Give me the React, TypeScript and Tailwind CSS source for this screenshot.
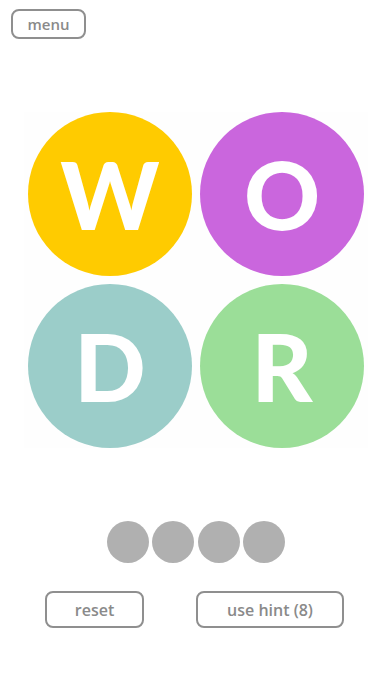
const tiles = [
  { letter: "W", color: "bg-[#ffcb00]" },
  { letter: "O", color: "bg-[#ca66dd]" },
  { letter: "D", color: "bg-[#9bcdc9]" },
  { letter: "R", color: "bg-[#9bde98]" },
];

export default function App() {
  return (
    <div
      className="w-[392px] h-[696px] bg-white flex flex-col"
      style={{ fontFamily: "'Open Sans', 'Noto Sans', sans-serif" }}
    >
      {/* top bar */}
      <div className="pt-[9px] pl-[11px]">
        <button className="w-[75px] h-[30px] rounded-[8px] border-2 border-[#8f8f8f] text-[#8a8a8a] text-[15px] font-semibold leading-none">
          menu
        </button>
      </div>

      {/* letter board */}
      <div className="mt-[73px] mx-auto w-[344px] bg-[#fefefe] px-[4px]">
        <div className="grid grid-cols-2 gap-[8px]">
          {tiles.map((t) => (
            <div
              key={t.letter}
              className={`w-[164px] h-[164px] rounded-full ${t.color} flex items-center justify-center`}
            >
              <span
                className="text-white text-[94px] font-black leading-none"
                style={{ fontFamily: "Lato, sans-serif" }}
              >
                {t.letter}
              </span>
            </div>
          ))}
        </div>
      </div>

      {/* answer slots */}
      <div className="mt-[73px] flex justify-center gap-[3.5px]">
        {[0, 1, 2, 3].map((i) => (
          <div key={i} className="w-[42px] h-[42px] rounded-full bg-[#b0b0b0]" />
        ))}
      </div>

      {/* actions */}
      <div className="mt-[28px] flex pl-[45px] gap-[52px]">
        <button className="w-[99px] h-[37px] rounded-[8px] border-2 border-[#8f8f8f] text-[#8a8a8a] text-[16px] font-semibold">
          reset
        </button>
        <button className="w-[148px] h-[37px] rounded-[8px] border-2 border-[#8f8f8f] text-[#8a8a8a] text-[16px] font-semibold">
          use hint (8)
        </button>
      </div>
    </div>
  );
}
